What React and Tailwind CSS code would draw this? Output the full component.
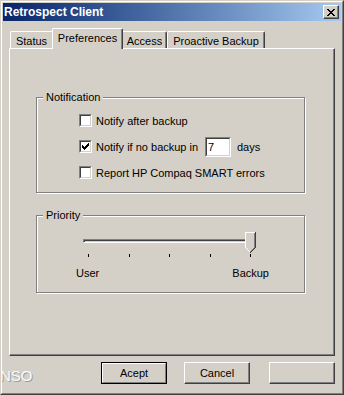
import React from "react";

function Pixels({ rows, palette }) {
  const h = rows.length;
  const w = rows[0].length;
  const rects = [];
  rows.forEach((r, y) => {
    [...r].forEach((c, x) => {
      if (palette[c]) {
        rects.push(
          <rect key={`${x}-${y}`} x={x} y={y} width="1" height="1" fill={palette[c]} />
        );
      }
    });
  });
  return (
    <svg width={w} height={h} viewBox={`0 0 ${w} ${h}`} shapeRendering="crispEdges" className="block">
      {rects}
    </svg>
  );
}

const CLOSE_X = [
  "XX....XX",
  ".XX..XX.",
  "..XXXX..",
  "...XX...",
  "..XXXX..",
  ".XX..XX.",
  "XX....XX",
];

const CHECK = [
  "......X",
  ".....XX",
  "X...XXX",
  "XX.XXX.",
  "XXXXX..",
  ".XXX...",
  "..X....",
];

const THUMB = [
  "WWWWWWWWWWD",
  "WFFFFFFFFGD",
  "WFFFFFFFFGD",
  "WFFFFFFFFGD",
  "WFFFFFFFFGD",
  "WFFFFFFFFGD",
  "WFFFFFFFFGD",
  "WFFFFFFFFGD",
  "WFFFFFFFFGD",
  "WFFFFFFFFGD",
  "WFFFFFFFFGD",
  "WFFFFFFFFGD",
  "WFFFFFFFFGD",
  "WFFFFFFFFGD",
  "WFFFFFFFFGD",
  "WFFFFFFFFGD",
  ".WFFFFFFGD.",
  "..WFFFFGD..",
  "...WFFGD...",
  "....WGD....",
  ".....D.....",
];

function Checkbox({ checked }) {
  return (
    <div className="mt-[3px] w-[13px] h-[13px] shrink-0 border border-t-[#808080] border-l-[#808080] border-r-white border-b-white">
      <div className="h-full border border-t-[#404040] border-l-[#404040] border-r-[#d4d0c8] border-b-[#d4d0c8] bg-white flex items-center justify-center">
        {checked && <Pixels rows={CHECK} palette={{ X: "#000000" }} />}
      </div>
    </div>
  );
}

function CheckRow({ checked, children }) {
  return (
    <div className="flex h-[20px]">
      <Checkbox checked={checked} />
      <span className="ml-[4px] leading-[20px] whitespace-nowrap">{children}</span>
    </div>
  );
}

function Button({ children, className = "" }) {
  return (
    <div
      className={`w-[66px] h-[22px] border border-t-white border-l-white border-r-[#404040] border-b-[#404040] shadow-[inset_-1px_-1px_0_#808080] flex items-center justify-center leading-[13px] ${className}`}
    >
      {children}
    </div>
  );
}

export default function App() {
  return (
    <div className="w-[344px] h-[395px] bg-[#d4d0c8] border border-t-[#d4d0c8] border-l-[#d4d0c8] border-r-[#404040] border-b-[#404040] font-['Liberation_Sans',Arial,sans-serif] text-[11px] text-black overflow-hidden">
      <div className="h-full border border-t-white border-l-white border-r-[#808080] border-b-[#808080] p-px flex flex-col">
        {/* Title bar */}
        <div className="h-[18px] shrink-0 flex items-center bg-linear-to-r from-[#0a246a] to-[#a6caf0] pl-px pr-[2px]">
          <span className="text-white font-bold text-[12px] leading-[14px] whitespace-nowrap">
            Retrospect Client
          </span>
          <div className="ml-auto w-[16px] h-[14px] border border-t-white border-l-white border-r-[#404040] border-b-[#404040] bg-[#d4d0c8] shadow-[inset_-1px_-1px_0_#808080] flex items-center justify-center">
            <Pixels rows={CLOSE_X} palette={{ X: "#000000" }} />
          </div>
        </div>

        {/* Tabs + panel */}
        <div className="mt-[7px] px-[6px] flex flex-col">
          <div className="flex items-end h-[20px] pl-px">
            <div className="w-[42px] h-[17px] border-t border-l border-white rounded-tl-[2px] text-center pt-[3px] leading-[13px]">
              Status
            </div>
            <div className="relative z-10 -mb-px w-[71px] h-[21px] border-t border-l border-r border-t-white border-l-white border-r-[#404040] shadow-[inset_-1px_0_0_#808080] rounded-t-[2px] bg-[#d4d0c8] text-center pt-[3px] leading-[13px]">
              Preferences
            </div>
            <div className="w-[44px] h-[17px] border-t border-r border-t-white border-r-[#404040] shadow-[inset_-1px_0_0_#808080] rounded-tr-[2px] text-center pt-[3px] leading-[13px]">
              Access
            </div>
            <div className="w-[98px] h-[17px] border-t border-l border-r border-t-white border-l-white border-r-[#404040] shadow-[inset_-1px_0_0_#808080] rounded-t-[2px] text-center pt-[3px] leading-[13px] whitespace-nowrap">
              Proactive Backup
            </div>
          </div>

          <div className="h-[308px] border border-t-white border-l-white border-r-[#404040] border-b-[#404040] shadow-[inset_-1px_-1px_0_#808080] pl-[26px] pt-[42px]">
            {/* Notification group */}
            <fieldset className="w-[269px] border border-[#808080] shadow-[inset_1px_1px_0_#ffffff,1px_1px_0_#ffffff]">
              <legend className="ml-[6px] px-[3px] leading-[13px] bg-[#d4d0c8]">Notification</legend>
              <div className="pl-[42px] pt-[7px] pb-[9px] flex flex-col gap-[6px]">
                <CheckRow checked={false}>Notify after backup</CheckRow>
                <div className="flex h-[20px]">
                  <Checkbox checked />
                  <span className="ml-[4px] w-[109px] shrink-0 leading-[20px] whitespace-nowrap">
                    Notify if no backup in
                  </span>
                  <div className="w-[26px] h-[20px] shrink-0 border border-t-[#808080] border-l-[#808080] border-r-white border-b-white">
                    <div className="h-full border border-t-[#404040] border-l-[#404040] border-r-[#d4d0c8] border-b-[#d4d0c8] bg-white pl-px flex items-center leading-[13px]">
                      7
                    </div>
                  </div>
                  <span className="ml-[6px] leading-[20px]">days</span>
                </div>
                <CheckRow checked={false}>Report HP Compaq SMART errors</CheckRow>
              </div>
            </fieldset>

            {/* Priority group */}
            <fieldset className="mt-[16px] w-[269px] border border-[#808080] shadow-[inset_1px_1px_0_#ffffff,1px_1px_0_#ffffff]">
              <legend className="ml-[6px] px-[3px] leading-[13px] bg-[#d4d0c8]">Priority</legend>
              <div className="pl-[46px] pt-[10px] pb-[12px]">
                <div className="relative w-[174px] h-[21px] pt-[7px]">
                  <div className="w-[173px] h-[4px] border border-t-[#808080] border-l-[#808080] border-r-white border-b-white">
                    <div className="h-full border-t border-l border-[#404040]" />
                  </div>
                  <div className="absolute left-[162px] top-0">
                    <Pixels
                      rows={THUMB}
                      palette={{ W: "#ffffff", F: "#d4d0c8", G: "#808080", D: "#404040" }}
                    />
                  </div>
                </div>
                <div className="ml-[5px] flex items-start h-[4px]">
                  <div className="mt-px w-px h-[3px] bg-black" />
                  <div className="mt-px ml-[40px] w-px h-[3px] bg-black" />
                  <div className="mt-px ml-[39px] w-px h-[3px] bg-black" />
                  <div className="mt-px ml-[40px] w-px h-[3px] bg-black" />
                  <div className="mt-px ml-[39px] w-px h-[3px] bg-black" />
                </div>
                <div className="-ml-[7px] mt-[10px] w-[193px] flex justify-between leading-[13px]">
                  <span>User</span>
                  <span>Backup</span>
                </div>
              </div>
            </fieldset>
          </div>
        </div>

        {/* Bottom buttons */}
        <div className="mt-[6px] flex h-[22px]">
          <div className="w-[98px] shrink-0">
            <span className="block -ml-[3px] mt-[5px] text-[15px] leading-[17px] text-[#fafafa] [text-shadow:1px_1px_0_#9c9c9c]">
              NSO
            </span>
          </div>
          <div className="w-[66px] h-[22px] border border-black">
            <div className="h-full border border-t-white border-l-white border-r-[#808080] border-b-[#808080] flex items-center justify-center leading-[13px]">
              Acept
            </div>
          </div>
          <Button className="ml-[17px]">Cancel</Button>
          <Button className="ml-[19px]" />
        </div>
      </div>
    </div>
  );
}
